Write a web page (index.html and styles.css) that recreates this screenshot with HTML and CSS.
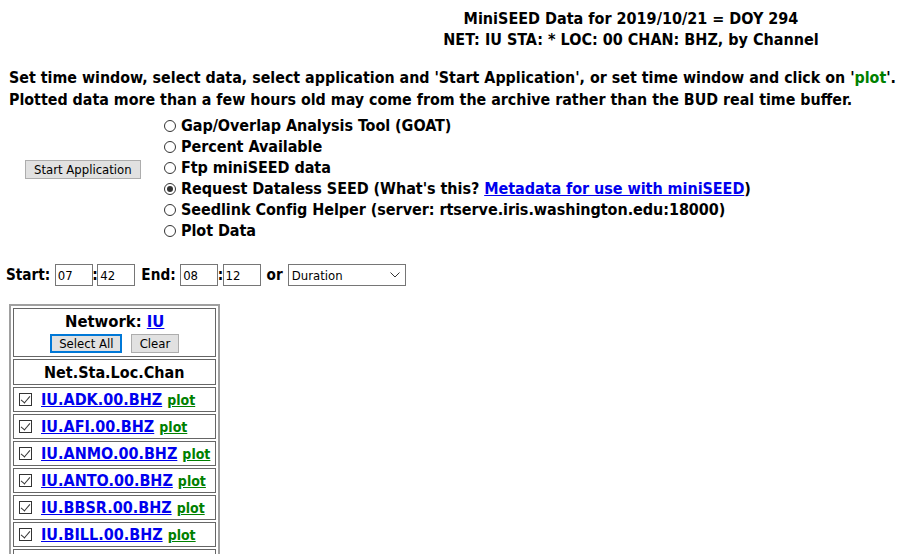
FILE: index.html
```html
<!DOCTYPE html>
<html lang="en">
<head>
    <meta charset="UTF-8">
    <title>MiniSEED Data</title>
    <link rel="stylesheet" href="styles.css">
</head>
<body>
    <div class="page">
        <div class="title">
            MiniSEED Data for 2019/10/21 = DOY 294<br>
            NET: IU STA: * LOC: 00 CHAN: BHZ, by Channel
        </div>

        <p class="intro">
            Set time window, select data, select application and 'Start Application', or set time window and click on '<span class="green">plot</span>'.<br>
            Plotted data more than a few hours old may come from the archive rather than the BUD real time buffer.
        </p>

        <div class="apps">
            <div class="start-cell">
                <button class="btn">Start Application</button>
            </div>
            <div class="choices">
                <label class="choice"><input type="radio" name="app"> Gap/Overlap Analysis Tool (GOAT)</label>
                <label class="choice"><input type="radio" name="app"> Percent Available</label>
                <label class="choice"><input type="radio" name="app"> Ftp miniSEED data</label>
                <label class="choice"><input type="radio" name="app" checked> Request Dataless SEED (What's this? <a href="#">Metadata for use with miniSEED</a>)</label>
                <label class="choice"><input type="radio" name="app"> Seedlink Config Helper (server: rtserve.iris.washington.edu:18000)</label>
                <label class="choice"><input type="radio" name="app"> Plot Data</label>
            </div>
        </div>

        <div class="times">
            <span>Start:</span>
            <input class="tm first" type="text" value="07"><span class="colon">:</span><input class="tm" type="text" value="42">
            <span class="lbl">End:</span>
            <input class="tm first" type="text" value="08"><span class="colon">:</span><input class="tm" type="text" value="12">
            <span class="lbl">or</span>
            <span class="dur-wrap">
                <select class="dur"><option>Duration</option></select>
                <svg class="chev" width="10" height="6" viewBox="0 0 10 6"><path d="M0.5 0.5 L5 5 L9.5 0.5" fill="none" stroke="#333" stroke-width="1"/></svg>
            </span>
        </div>

        <table class="chans">
            <tr><td class="net">
                Network: <a href="#">IU</a><br>
                <button class="btn sel">Select All</button>
                <button class="btn">Clear</button>
            </td></tr>
            <tr><td class="head">Net.Sta.Loc.Chan</td></tr>
            <tr><td><input type="checkbox" checked> <a href="#">IU.ADK.00.BHZ</a> <a href="#" class="plot">plot</a></td></tr>
            <tr><td><input type="checkbox" checked> <a href="#">IU.AFI.00.BHZ</a> <a href="#" class="plot">plot</a></td></tr>
            <tr><td><input type="checkbox" checked> <a href="#">IU.ANMO.00.BHZ</a> <a href="#" class="plot">plot</a></td></tr>
            <tr><td><input type="checkbox" checked> <a href="#">IU.ANTO.00.BHZ</a> <a href="#" class="plot">plot</a></td></tr>
            <tr><td><input type="checkbox" checked> <a href="#">IU.BBSR.00.BHZ</a> <a href="#" class="plot">plot</a></td></tr>
            <tr><td><input type="checkbox" checked> <a href="#">IU.BILL.00.BHZ</a> <a href="#" class="plot">plot</a></td></tr>
            <tr><td><input type="checkbox" checked> <a href="#">IU.CASY.00.BHZ</a> <a href="#" class="plot">plot</a></td></tr>
        </table>
    </div>
</body>
</html>
```

FILE: styles.css
```css
html, body { margin: 0; overflow: hidden; background: #fff; }
body { font-family: "DejaVu Sans Condensed", "DejaVu Sans", sans-serif; font-weight: bold; color: #000; }
.page { padding: 8px 0 0 9px; }
a { color: #0000ee; }
.green { color: #008000; }

.title { width: 1244px; text-align: center; font-size: 16px; line-height: 21px; }
.intro { margin: 17px 0 0; font-size: 15.85px; line-height: 22px; }

.apps { display: flex; align-items: center; margin-top: 4px; }
.start-cell { width: 155px; padding-left: 16px; margin-bottom: 18px; box-sizing: border-box; }
.choices { display: flex; flex-direction: column; }
.choice { font-size: 16px; line-height: 21px; white-space: nowrap; letter-spacing: -0.05px; }

input[type=radio] { appearance: none; margin: 0 0 0 0; width: 12px; height: 12px; border: 1px solid #333; border-radius: 50%; background: #fff; vertical-align: -1px; position: relative; }
input[type=radio]:checked::after { content: ""; position: absolute; left: 2px; top: 2px; width: 6px; height: 6px; border-radius: 50%; background: #333; }

.btn { font-family: "DejaVu Sans Condensed", sans-serif; font-weight: normal; font-size: 13px; background: #e1e1e1; border: 1px solid #adadad; padding: 1px 8px; color: #000; }
.btn.sel { border: 2px solid #0078d7; padding: 0 7px; }

.times { margin: 23px 0 0 -3px; font-size: 15.2px; display: flex; align-items: center; }
.times .colon { margin: 0 -0.5px; }
.times .lbl { margin-left: 6px; }
.tm { width: 38px; height: 22px; box-sizing: border-box; border: 1px solid #767676; font-family: "DejaVu Sans Condensed", sans-serif; font-size: 13px; padding: 1px 2px; }
.tm.first { margin-left: 4.5px; }
.dur-wrap { position: relative; margin-left: 5px; display: flex; }
.dur { appearance: none; width: 118px; height: 22px; border: 1px solid #767676; border-radius: 0; font-family: "DejaVu Sans Condensed", sans-serif; font-size: 13px; background: #fff; padding: 0 3px; }
.chev { position: absolute; right: 6px; top: 8px; }

.chans { margin-top: 18px; border: 2px solid #a0a0a0; border-spacing: 2px; font-size: 16px; }
.chans td { border: 1px solid #666; padding: 2px 5px 2px 4px; white-space: nowrap; }
.chans td.net, .chans td.head { text-align: center; }
.chans td.head { padding-top: 3px; }
.chans td.net { font-size: 16.5px; line-height: 20px; padding: 3px 4px 3px; }
.chans td.net .btn { margin-top: 2px; }
.chans td.net .btn + .btn { margin-left: 3px; }
input[type=checkbox] { appearance: none; margin: 0 4px 0 1px; width: 13px; height: 13px; border: 1px solid #333; background: #fff; vertical-align: -1px; position: relative; }
input[type=checkbox]:checked::after { content: ""; position: absolute; left: 3px; top: 0px; width: 4px; height: 8px; border: solid #333; border-width: 0 1px 1px 0; transform: rotate(40deg); }
.plot { color: #008000; font-size: 14px; }
```
